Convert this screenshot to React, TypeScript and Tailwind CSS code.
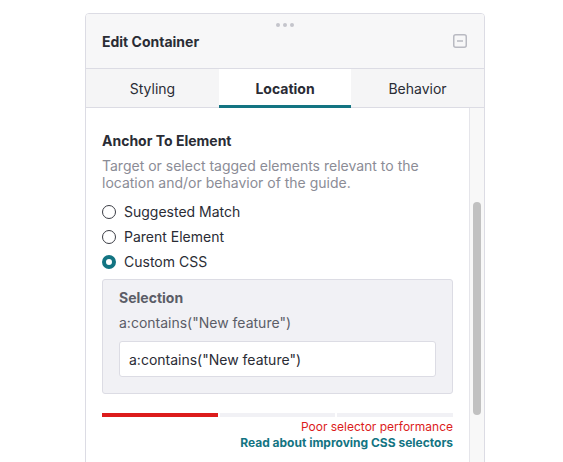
import React from "react";

function Radio({ checked, label }: { checked?: boolean; label: string }) {
  return (
    <div className="flex items-center h-[25px]">
      {checked ? (
        <span className="w-[14px] h-[14px] rounded-full border-[4px] border-[#137482] bg-white box-border" />
      ) : (
        <span className="w-[14px] h-[14px] rounded-full border border-[#3b3d45] bg-white box-border" />
      )}
      <span className="ml-[8px] text-[14px] text-[#2a2c35]">{label}</span>
    </div>
  );
}

export default function App() {
  return (
    <div className="w-[563px] h-[462px] bg-white overflow-hidden" style={{ fontFamily: "Inter, 'Noto Sans', sans-serif" }}>
      <div className="ml-[85px] mt-[13px] w-[400px] h-[470px] border border-[#dcdce4] rounded-[4px] flex flex-col overflow-hidden">
        {/* header */}
        <div className="h-[54px] bg-[#f7f7f8] relative flex items-center px-[16px]">
          <div className="absolute left-1/2 -translate-x-1/2 top-[9px] flex gap-[3px]">
            <span className="w-[4px] h-[4px] rounded-full bg-[#c4c5cc]" />
            <span className="w-[4px] h-[4px] rounded-full bg-[#c4c5cc]" />
            <span className="w-[4px] h-[4px] rounded-full bg-[#c4c5cc]" />
          </div>
          <span className="text-[14px] font-bold text-[#2a2c35] flex-1">Edit Container</span>
          <svg width="14" height="14" viewBox="0 0 14 14" className="mr-[1px]">
            <rect x="0.75" y="0.75" width="12.5" height="12.5" rx="2" fill="none" stroke="#b9bac2" strokeWidth="1.5" />
            <line x1="4" y1="7" x2="10" y2="7" stroke="#b9bac2" strokeWidth="1.5" />
          </svg>
        </div>
        {/* tabs */}
        <div className="h-[40px] flex border-t border-b border-[#dcdce4] bg-[#f5f5f6]">
          <div className="w-[133px] flex items-center justify-center text-[14px] text-[#2a2c35]">Styling</div>
          <div className="w-[132px] flex items-center justify-center text-[14px] font-bold text-[#2a2c35] bg-white border-b-[3px] border-[#137482] -mb-[1px] pt-[3px]">Location</div>
          <div className="flex-1 flex items-center justify-center text-[14px] text-[#2a2c35]">Behavior</div>
        </div>
        {/* body */}
        <div className="flex flex-1">
          <div className="flex-1 bg-white px-[16px] pt-[23px]">
            <div className="text-[14px] font-bold text-[#2a2c35] leading-[20px]">Anchor To Element</div>
            <div className="mt-[6px] text-[14px] text-[#8b8c96] leading-[17px]">
              Target or select tagged elements relevant to the location and/or behavior of the guide.
            </div>
            <div className="mt-[8px]">
              <Radio label="Suggested Match" />
              <Radio label="Parent Element" />
              <Radio checked label="Custom CSS" />
            </div>
            <div className="mt-[5px] bg-[#f1f1f5] border border-[#dcdce4] rounded-[3px] px-[16px] pt-[8px] pb-[16px]">
              <div className="text-[14px] font-bold text-[#5b5d67] leading-[20px]">Selection</div>
              <div className="mt-[5px] text-[14px] text-[#5b5d67] leading-[20px]">a:contains("New feature")</div>
              <div className="mt-[8px] h-[36px] bg-white border border-[#dcdce4] rounded-[3px] flex items-center px-[9px] text-[14px] text-[#2a2c35]">
                a:contains("New feature")
              </div>
            </div>
            <div className="mt-[19px] flex gap-[2px] h-[4px]">
              <div className="flex-1 bg-[#dc1c1c]" />
              <div className="flex-1 bg-[#f1f1f5]" />
              <div className="flex-1 bg-[#f1f1f5]" />
            </div>
            <div className="mt-[2px] text-right text-[12px] text-[#dc1c1c] leading-[16px]">Poor selector performance</div>
            <div className="text-right text-[12px] font-bold text-[#137482] leading-[16px]">Read about improving CSS selectors</div>
          </div>
          <div className="w-[15px] bg-[#f8f8f8] border-l border-[#e5e5ea] relative">
            <div className="absolute left-[3px] top-[94px] w-[8px] h-[213px] rounded-[4px] bg-[#c1c1c1]" />
          </div>
        </div>
      </div>
    </div>
  );
}
